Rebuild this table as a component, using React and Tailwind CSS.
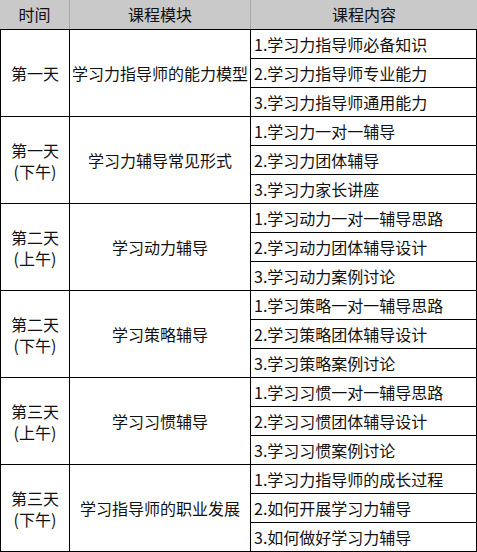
import React from "react";

const groups = [
  {
    day: ["第一天"],
    module: "学习力指导师的能力模型",
    items: ["1.学习力指导师必备知识", "2.学习力指导师专业能力", "3.学习力指导师通用能力"],
  },
  {
    day: ["第一天", "(下午)"],
    module: "学习力辅导常见形式",
    items: ["1.学习力一对一辅导", "2.学习力团体辅导", "3.学习力家长讲座"],
  },
  {
    day: ["第二天", "(上午)"],
    module: "学习动力辅导",
    items: ["1.学习动力一对一辅导思路", "2.学习动力团体辅导设计", "3.学习动力案例讨论"],
  },
  {
    day: ["第二天", "(下午)"],
    module: "学习策略辅导",
    items: ["1.学习策略一对一辅导思路", "2.学习策略团体辅导设计", "3.学习策略案例讨论"],
  },
  {
    day: ["第三天", "(上午)"],
    module: "学习习惯辅导",
    items: ["1.学习习惯一对一辅导思路", "2.学习习惯团体辅导设计", "3.学习习惯案例讨论"],
  },
  {
    day: ["第三天", "(下午)"],
    module: "学习指导师的职业发展",
    items: ["1.学习力指导师的成长过程", "2.如何开展学习力辅导", "3.如何做好学习力辅导"],
  },
];

const App = () => {
  return (
    <div
      className="w-[477px] bg-white text-[16px] text-[#111]"
      style={{ fontFamily: '"Microsoft YaHei", "Noto Sans CJK SC", sans-serif' }}
    >
      {/* Header */}
      <div className="flex h-[29px] bg-[#c9c9c9] leading-[29px]">
        <div className="w-[70px] border-r border-[#a8a8a8] text-center">时间</div>
        <div className="w-[181px] border-r border-[#a8a8a8] text-center">课程模块</div>
        <div className="flex-1 text-center">课程内容</div>
      </div>

      {/* Body */}
      <div className="border-x border-b border-black">
        {groups.map((g, i) => (
          <div key={i} className="flex border-t border-black">
            <div className="w-[69px] border-r border-black flex flex-col items-center justify-center gap-[1px] leading-[20px]">
              {g.day.map((d, j) => (
                <div key={j}>{d}</div>
              ))}
            </div>
            <div className="w-[181px] border-r border-black flex items-center justify-center whitespace-nowrap">
              {g.module}
            </div>
            <div className="flex-1 flex flex-col">
              {g.items.map((it, j) => (
                <div
                  key={j}
                  className={`leading-[28px] pl-[3px] whitespace-nowrap ${j > 0 ? "h-[29px] border-t border-black" : "h-[28px]"}`}
                >
                  {it}
                </div>
              ))}
            </div>
          </div>
        ))}
      </div>
    </div>
  );
};

export default App;
